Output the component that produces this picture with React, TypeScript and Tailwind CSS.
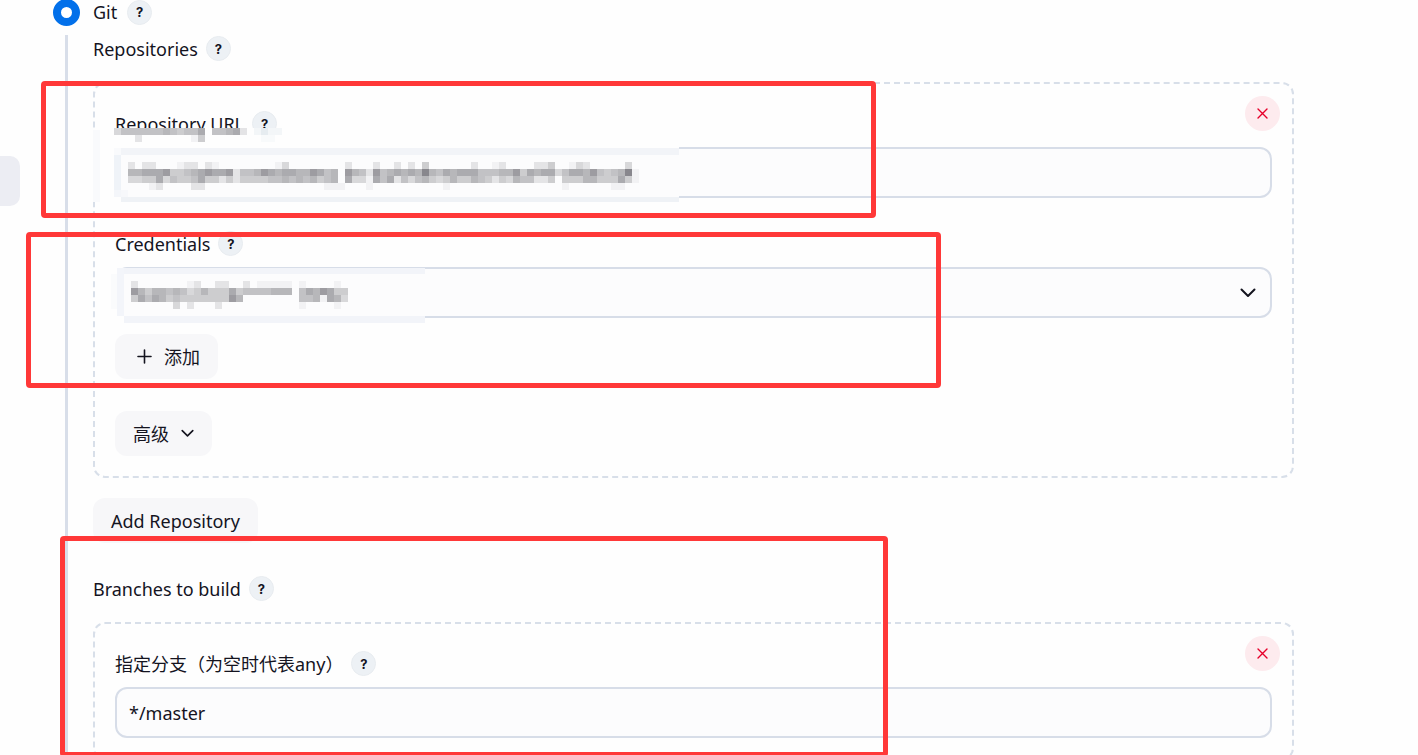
import type { ReactNode } from "react";

const SHADES = [
  "transparent",
  "#f2f2f4",
  "#e4e4e6",
  "#d8d8da",
  "#cdcdcf",
  "#c2c2c5",
  "#b7b7ba",
  "#ababaf",
  "#9d9ca1",
  "#88878d",
];

const BLOCK = 7;

type MosaicProps = { rows: string[]; x: number; y: number };

/* Each digit is the darkness of one censor block. */
function Blocks({ rows, x, y }: MosaicProps) {
  return (
    <g>
      {rows.flatMap((row, r) =>
        row
          .split("")
          .map((digit, c) =>
            digit === "0" ? null : (
              <rect
                key={`${r}-${c}`}
                x={x + c * BLOCK}
                y={y + r * BLOCK}
                width={BLOCK}
                height={BLOCK}
                fill={SHADES[Number(digit)]}
              />
            ),
          ),
      )}
    </g>
  );
}

const LABEL_BLOCKS = ["3555555654557055672", "0002000000014000000"];

const URL_BLOCKS = [
  "20220001220210000000013" + "0000000020002002020400000" + "0200120000224001320000030",
  "66777844567877825568767" + "7668756086528567676965767" + "7755566847677357768545691",
  "33447354457442424444556" + "5656456073317572535643464" + "4654243655224044466444741",
  "00012000022000000000000" + "0000011100010000000000100" + "0000000000000010000001100",
];

const CREDENTIAL_BLOCKS = [
  "2000000012002200201111101000010",
  "8646656534644474555566605768744",
  "4757645444444486000000005561763",
  "0000003020002000000000001000010",
];

function UrlMosaic() {
  return (
    <svg
      aria-hidden="true"
      className="pointer-events-none absolute -top-[19px] -left-[22px]"
      width="586"
      height="74"
      shapeRendering="crispEdges"
    >
      <rect width="586" height="74" fill="#fefefe" />
      <rect y="2" width="7" height="72" fill="#f9fafc" />
      <rect x="28" y="27" width="558" height="42" fill="#fcfcfd" />
      <rect x="28" y="20" width="558" height="7" fill="#f2f4f8" />
      <rect x="21" y="20" width="7" height="7" fill="#f9fafc" />
      <rect x="21" y="27" width="7" height="35" fill="#eff3f8" />
      <rect x="21" y="62" width="7" height="7" fill="#f4f6fa" />
      <rect x="28" y="62" width="7" height="7" fill="#f7f8fb" />
      <rect x="28" y="69" width="558" height="5" fill="#eff2f6" />
      <Blocks rows={LABEL_BLOCKS} x={21} y={0} />
      <rect x="161" width="28" height="7" fill="#f3f6f8" />
      <rect x="168" width="7" height="7" fill="#e6ecf0" />
      <rect x="168" y="7" width="14" height="7" fill="#f8fafb" />
      <Blocks rows={URL_BLOCKS} x={35} y={34} />
    </svg>
  );
}

function CredentialMosaic() {
  return (
    <svg
      aria-hidden="true"
      className="pointer-events-none absolute top-px -left-1"
      width="314"
      height="55"
      shapeRendering="crispEdges"
    >
      <rect width="314" height="55" fill="#fefefe" />
      <rect y="6" width="6" height="35" fill="#fafbfc" />
      <rect x="13" y="6" width="301" height="43" fill="#fcfcfd" />
      <rect x="13" width="301" height="6" fill="#f2f4f9" />
      <rect x="6" width="7" height="48" fill="#f3f5fa" />
      <rect x="13" y="48" width="301" height="7" fill="#f2f4f9" />
      <Blocks rows={CREDENTIAL_BLOCKS} x={20} y={13} />
    </svg>
  );
}

function Help({ topic }: { topic: string }) {
  return (
    <button
      type="button"
      aria-label={`Help: ${topic}`}
      className="flex size-[25px] shrink-0 items-center justify-center rounded-full border border-[#e8ecf0] bg-[#edf1f5] font-['Inter',sans-serif] text-[13px] font-bold text-[#14141f]"
    >
      ?
    </button>
  );
}

type FieldLabelProps = { id?: string; children: string };

function FieldLabel({ id, children }: FieldLabelProps) {
  return (
    <div className="flex h-[25px] items-center gap-2">
      {id ? <label htmlFor={id}>{children}</label> : <span>{children}</span>}
      <Help topic={children} />
    </div>
  );
}

function Chunk({ children }: { children: ReactNode }) {
  return (
    <div className="relative rounded-xl border-2 border-dashed border-[#d8dfe9] px-5 pt-[27px] pb-5">
      <button
        type="button"
        aria-label="Delete"
        className="absolute top-3 right-3 flex size-[35px] items-center justify-center rounded-full bg-[#fdebee] text-[#e6002a]"
      >
        <svg width="11" height="11" viewBox="0 0 11 11" fill="none" stroke="currentColor" strokeWidth="1.4" strokeLinecap="round">
          <path d="M1 1l9 9M10 1l-9 9" />
        </svg>
      </button>
      {children}
    </div>
  );
}

function Chevron({ size }: { size: number }) {
  return (
    <svg width={size} height={size} viewBox="0 0 16 16" fill="none" stroke="currentColor" strokeWidth="2" strokeLinecap="round" strokeLinejoin="round">
      <path d="M1.5 4.5L8 11l6.5-6.5" />
    </svg>
  );
}

const BOX =
  "block h-[51px] w-full appearance-none rounded-xl border-2 border-[#d7dde8] bg-[#fcfcfd] px-3 outline-none";
const BUTTON =
  "flex h-[45px] items-center rounded-xl bg-[#f7f7f9] px-[18px]";

export default function App() {
  return (
    <div className="relative h-screen overflow-hidden bg-[#fefefe] font-['Noto_Sans','Noto_Sans_CJK_SC',sans-serif] text-lg leading-6 text-[#14141f]">
      <div className="absolute top-[156px] left-0 h-[50px] w-5 rounded-r-[10px] bg-[#ecedf3]" />

      <main className="pr-[124px]">
        <div className="flex h-6 items-center pl-[53px]">
          <input
            id="scm-git"
            type="radio"
            name="scm"
            defaultChecked
            className="size-[27px] appearance-none rounded-full border-8 border-[#0270ea] bg-white"
          />
          <label htmlFor="scm-git" className="mr-[10px] ml-[13px]">
            Git
          </label>
          <Help topic="Git" />
        </div>

        <div className="mt-[11px] ml-[65px] border-l-[3px] border-[#d8dee9] pt-px pl-[25px]">
          <FieldLabel>Repositories</FieldLabel>
          <div className="mt-[21px]">
            <Chunk>
              <FieldLabel id="repo-url">Repository URL</FieldLabel>
              <div className="relative mt-[11px]">
                <input id="repo-url" type="text" className={BOX} />
                <UrlMosaic />
              </div>

              <div className="mt-[33px]">
                <FieldLabel id="credentials">Credentials</FieldLabel>
              </div>
              <div className="relative mt-[11px]">
                <select id="credentials" className={BOX} />
                <CredentialMosaic />
                <span className="pointer-events-none absolute inset-y-0 right-4 flex items-center">
                  <Chevron size={16} />
                </span>
              </div>

              <button type="button" className={`${BUTTON} mt-4 gap-3`}>
                <svg className="ml-1" width="15" height="15" viewBox="0 0 15 15" fill="none" stroke="currentColor" strokeWidth="1.6" strokeLinecap="round">
                  <path d="M7.5 1v13M1 7.5h13" />
                </svg>
                添加
              </button>

              <button type="button" className={`${BUTTON} mt-8 gap-3`}>
                高级
                <Chevron size={13} />
              </button>
            </Chunk>
          </div>

          <button type="button" className={`${BUTTON} mt-5`}>
            Add Repository
          </button>

          <div className="mt-[33px]">
            <FieldLabel>Branches to build</FieldLabel>
          </div>
          <div className="mt-[21px]">
            <Chunk>
              <FieldLabel id="branch">指定分支（为空时代表any）</FieldLabel>
              <div className="mt-[11px]">
                <input id="branch" type="text" defaultValue="*/master" className={BOX} />
              </div>
            </Chunk>
          </div>
        </div>
      </main>

      <div className="pointer-events-none absolute top-[81px] left-[41px] h-[137px] w-[835px] rounded border-[5px] border-[#ff3838]" />
      <div className="pointer-events-none absolute top-[232px] left-[26px] h-[156px] w-[915px] rounded border-[5px] border-[#ff3838]" />
      <div className="pointer-events-none absolute top-[536px] left-[60px] h-[221px] w-[828px] rounded border-[5px] border-[#ff3838]" />
    </div>
  );
}
